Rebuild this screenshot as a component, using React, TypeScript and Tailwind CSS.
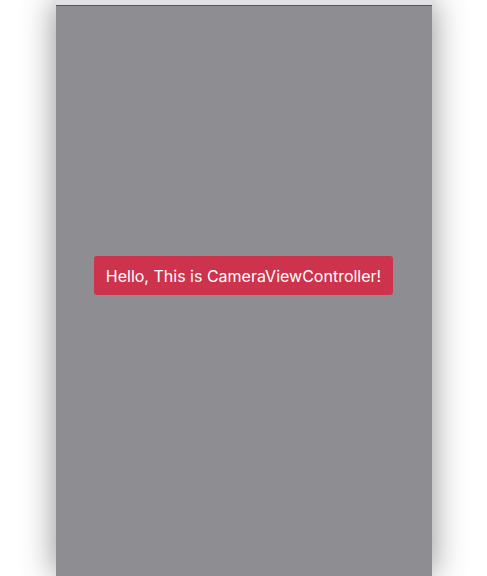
export default function App() {
  return (
    <div className="h-[576px] w-full overflow-hidden bg-white" style={{ fontFamily: 'Inter, "Noto Sans", sans-serif' }}>
      <div className="mx-auto flex h-full w-[376px] flex-col bg-[#8e8d92] shadow-[0_0_32px_rgba(0,0,0,0.45)]">
        <div className="h-[5px] bg-[#e1e1e3]" />
        <div className="h-px bg-[#55555a]" />
        <div className="flex flex-1 items-start justify-center pt-[250px]">
          <div className="flex h-[39px] w-[299px] items-center justify-center rounded-[3px] bg-[#cd334c] text-[16px] text-white">
            Hello, This is CameraViewController!
          </div>
        </div>
      </div>
    </div>
  );
}
